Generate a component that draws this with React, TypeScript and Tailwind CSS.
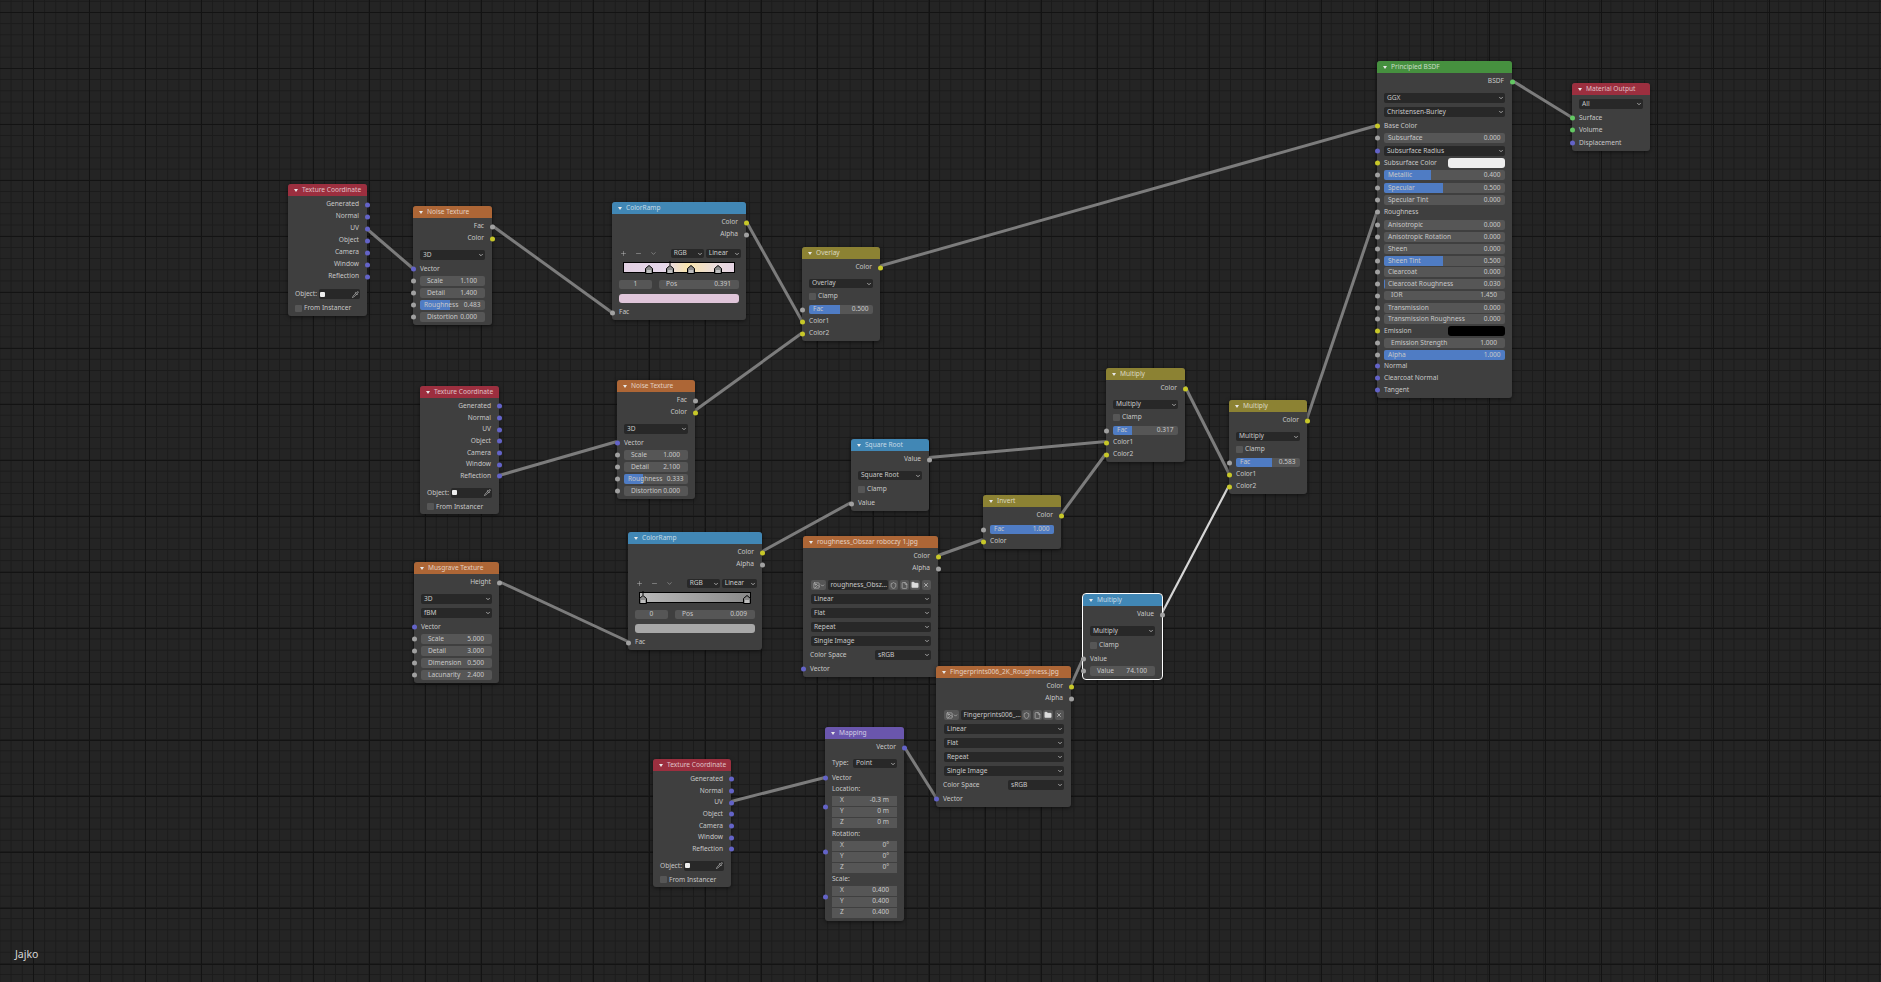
import React from "react";
import { ChevronDown, File, Folder, Image as ImageIcon, Minus, Pipette, Plus, Shield, X } from "lucide-react";

type SocketKind = "color" | "float" | "vector" | "shader";

const socketColors: Record<SocketKind, string> = {
  color: "bg-[#c7c729]",
  float: "bg-[#a1a1a1]",
  vector: "bg-[#6363c7]",
  shader: "bg-[#63c763]",
};

// wire endpoints, in page pixels: x1 y1 x2 y2
const wires = [
  [367, 229, 413, 268.5],
  [492, 225.5, 612, 312.5],
  [746, 221, 802, 321],
  [695, 410.5, 802, 333],
  [880, 266, 1377, 125.5],
  [1512, 80.5, 1572, 117.5],
  [499, 475.5, 617, 441.5],
  [499, 581.5, 628, 641.5],
  [762, 551.5, 851, 502.5],
  [929, 457.5, 1106, 441.5],
  [938, 555.5, 983, 539.5],
  [1061, 514.5, 1106, 453.5],
  [1185, 386.5, 1229, 473.5],
  [1307, 418.5, 1377, 211.5],
  [1071, 685, 1083, 658.5],
  [904, 746.5, 936, 797.5],
  [731, 801.5, 825, 777.5],
];

const Socket = ({ kind, right }: { kind: SocketKind; right?: boolean }) => (
  <span
    className={`absolute top-1/2 size-[5px] -translate-y-1/2 rounded-full ${right ? "right-[-2.5px]" : "left-[-2.5px]"} ${socketColors[kind]}`}
  />
);

const Out = ({ label, kind, cls = "h-3" }: { label: string; kind: SocketKind; cls?: string }) => (
  <div className={`relative flex items-center justify-end pr-[8px] ${cls}`}>
    {label}
    <Socket kind={kind} right />
  </div>
);

const In = ({ label, kind }: { label: string; kind: SocketKind }) => (
  <div className="relative flex h-3 items-center pl-[7px]">
    {label}
    <Socket kind={kind} />
  </div>
);

const Dropdown = ({ label, kind, cls = "px-[7px]" }: { label: string; kind?: SocketKind; cls?: string }) => (
  <div className={`relative flex h-3 items-center ${cls}`}>
    {kind && <Socket kind={kind} />}
    <div className="flex h-[9.5px] flex-1 items-center justify-between rounded-[2px] bg-[#282828] pl-[3px] pr-[1.5px]">
      <span className="whitespace-nowrap">{label}</span>
      <ChevronDown size={6} strokeWidth={3} />
    </div>
  </div>
);

const Field = ({
  label,
  value,
  kind = "float",
  fill,
  num,
}: {
  label: string;
  value: string;
  kind?: SocketKind;
  fill?: string;
  num?: boolean;
}) => (
  <div className="relative flex h-3 items-center px-[7px]">
    <Socket kind={kind} />
    <div className="relative h-[9.5px] flex-1 overflow-hidden rounded-[2px] bg-[#565656]">
      {fill && <div className={`absolute inset-y-0 left-0 bg-[#4f7cc4] ${fill}`} />}
      <div className={`relative flex h-full items-center justify-between whitespace-nowrap ${num ? "pl-[7px] pr-[8px]" : "pl-[4px] pr-[4.5px]"}`}>
        <span>{label}</span>
        <span>{value}</span>
      </div>
    </div>
  </div>
);

const Swatch = ({ label, color }: { label: string; color: string }) => (
  <div className="relative flex h-3 items-center justify-between pl-[7px] pr-[7px]">
    {label}
    <Socket kind="color" />
    <div className={`h-[9.5px] w-[57px] rounded-[3px] ${color}`} />
  </div>
);

const Check = ({ label }: { label: string }) => (
  <div className="flex h-3 items-center gap-[2px] pl-[7px]">
    <span className="size-[7px] rounded-[1px] bg-[#565656]" />
    {label}
  </div>
);

const ObjectRow = () => (
  <div className="flex h-3 items-center gap-[2px] pl-[7px] pr-[7px]">
    Object:
    <div className="flex h-[9.5px] flex-1 items-center justify-between rounded-[2px] bg-[#282828] pl-[1px] pr-[1px]">
      <span className="size-[5px] rounded-[1px] bg-[#eeeeee]" />
      <Pipette size={7} strokeWidth={2} />
    </div>
  </div>
);

const Gap = ({ cls }: { cls: string }) => <div className={cls} />;

const Node = ({
  title,
  pos,
  header,
  selected,
  children,
}: {
  title: string;
  pos: string;
  header: string;
  selected?: boolean;
  children: React.ReactNode;
}) => (
  <div
    className={`absolute rounded-[3px] bg-[#3f3f3f] pb-[1.5px] shadow-[0_1px_4px_rgba(0,0,0,0.55)] ${pos} ${selected ? "outline outline-1 outline-white" : ""}`}
  >
    <div className={`flex h-3 items-center gap-[4px] rounded-t-[3px] pl-[6px] whitespace-nowrap text-white/70 ${header}`}>
      <svg width="4" height="3" viewBox="0 0 4 3" className="shrink-0">
        <path d="M0 0H4L2 3Z" fill="#e8e8e8" />
      </svg>
      {title}
    </div>
    <div className="pt-[2.5px]">{children}</div>
  </div>
);

const red = "bg-[#9c2f3f]";
const orange = "bg-[#ad6636]";
const blue = "bg-[#4187b5]";
const olive = "bg-[#8c8233]";
const green = "bg-[#46903f]";
const purple = "bg-[#6a56ad]";

const TextureCoordinate = ({ pos, rowH = "h-3", gap = "h-[5.5px]" }: { pos: string; rowH?: string; gap?: string }) => (
  <Node title="Texture Coordinate" pos={pos} header={red}>
    <Out label="Generated" kind="vector" cls={rowH} />
    <Out label="Normal" kind="vector" cls={rowH} />
    <Out label="UV" kind="vector" cls={rowH} />
    <Out label="Object" kind="vector" cls={rowH} />
    <Out label="Camera" kind="vector" cls={rowH} />
    <Out label="Window" kind="vector" cls={rowH} />
    <Out label="Reflection" kind="vector" cls={rowH} />
    <Gap cls={gap} />
    <ObjectRow />
    <Gap cls="h-[2px]" />
    <Check label="From Instancer" />
  </Node>
);

const NoiseTexture = ({ pos, scale, detail, rough, fill }: { pos: string; scale: string; detail: string; rough: string; fill: string }) => (
  <Node title="Noise Texture" pos={pos} header={orange}>
    <Out label="Fac" kind="float" />
    <Out label="Color" kind="color" />
    <Gap cls="h-[4.5px]" />
    <Dropdown label="3D" />
    <Gap cls="h-[2px]" />
    <In label="Vector" kind="vector" />
    <Field label="Scale" value={scale} num />
    <Field label="Detail" value={detail} num />
    <Field label="Roughness" value={rough} fill={fill} />
    <Field label="Distortion" value="0.000" num />
  </Node>
);

const RampHandle = ({ pos, active }: { pos: string; active?: boolean }) => (
  <svg width="8" height="9" viewBox="0 0 8 9" className={`absolute bottom-[-2px] overflow-visible ${pos}`}>
    {active && <path d="M4 0V-4" stroke="#000" />}
    <path d="M0.5 8.5V3.5L4 0.5L7.5 3.5V8.5Z" fill="#8a8a8a" stroke="#000" />
    <rect x="2" y="5" width="4" height="3" fill="#bdbdbd" />
  </svg>
);

const ColorRamp = ({
  pos,
  index,
  position,
  ramp,
  swatch,
  children,
}: {
  pos: string;
  index: string;
  position: string;
  ramp: string;
  swatch: string;
  children: React.ReactNode;
}) => (
  <Node title="ColorRamp" pos={pos} header={blue}>
    <Out label="Color" kind="color" />
    <Out label="Alpha" kind="float" />
    <Gap cls="h-[7px]" />
    <div className="flex h-3 items-center pl-[8px]">
      <span className="w-[15px]"><Plus size={7} strokeWidth={1.5} /></span>
      <span className="w-[15px]"><Minus size={7} strokeWidth={1.5} /></span>
      <span className="w-[20.7px]"><ChevronDown size={7} strokeWidth={1.5} /></span>
      <div className="mr-[2px] flex h-[9.5px] w-[33px] items-center justify-between rounded-[2px] bg-[#282828] pl-[3px] pr-[1px]">
        RGB
        <ChevronDown size={6} strokeWidth={3} />
      </div>
      <div className="flex h-[9.5px] w-[35px] items-center justify-between rounded-[2px] bg-[#282828] pl-[3px] pr-[1px]">
        Linear
        <ChevronDown size={6} strokeWidth={3} />
      </div>
    </div>
    <Gap cls="h-[2px]" />
    <div className={`relative mx-[11px] h-[11px] border border-black ${ramp}`}>{children}</div>
    <Gap cls="h-[6px]" />
    <div className="flex h-3 items-center gap-[7px] px-[7px]">
      <div className="flex h-[9.5px] w-[33px] items-center justify-center rounded-[2px] bg-[#565656]">{index}</div>
      <div className="flex h-[9.5px] flex-1 items-center justify-between rounded-[2px] bg-[#565656] pl-[7px] pr-[8px]">
        <span>Pos</span>
        <span>{position}</span>
      </div>
    </div>
    <Gap cls="h-[2px]" />
    <div className="flex h-3 items-center px-[7px]">
      <div className={`h-[9.5px] flex-1 rounded-[3px] ${swatch}`} />
    </div>
    <Gap cls="h-[2px]" />
    <In label="Fac" kind="float" />
  </Node>
);

const ImageTexture = ({ title, file, pos }: { title: string; file: string; pos: string }) => (
  <Node title={title} pos={pos} header={orange}>
    <Out label="Color" kind="color" />
    <Out label="Alpha" kind="float" />
    <Gap cls="h-[4.5px]" />
    <div className="flex h-3 items-center gap-[1.5px] pl-[8px] pr-[7px]">
      <div className="flex h-[9.5px] w-[15px] items-center justify-center rounded-[2px] bg-[#565656]">
        <ImageIcon size={7} strokeWidth={2} />
        <ChevronDown size={5} strokeWidth={3} />
      </div>
      <div className="h-[9.5px] w-[60px] whitespace-nowrap rounded-[2px] bg-[#282828] pl-[3px] leading-[9.5px]">{file}</div>
      <div className="flex h-[9.5px] w-[9px] items-center justify-center rounded-[2px] bg-[#565656]"><Shield size={7} strokeWidth={2} /></div>
      <div className="flex h-[9.5px] w-[9px] items-center justify-center rounded-[2px] bg-[#565656]"><File size={7} strokeWidth={2} /></div>
      <div className="flex h-[9.5px] w-[10px] items-center justify-center rounded-[2px] bg-[#565656]"><Folder size={8} fill="#dddddd" strokeWidth={1} /></div>
      <div className="flex h-[9.5px] w-[9px] items-center justify-center rounded-[2px] bg-[#565656]"><X size={6} strokeWidth={3} /></div>
    </div>
    <Gap cls="h-[2px]" />
    <Dropdown label="Linear" cls="pl-[8px] pr-[7px]" />
    <Gap cls="h-[2px]" />
    <Dropdown label="Flat" cls="pl-[8px] pr-[7px]" />
    <Gap cls="h-[2px]" />
    <Dropdown label="Repeat" cls="pl-[8px] pr-[7px]" />
    <Gap cls="h-[2px]" />
    <Dropdown label="Single Image" cls="pl-[8px] pr-[7px]" />
    <Gap cls="h-[2px]" />
    <div className="flex h-3 items-center justify-between pl-[7px] pr-[7px]">
      Color Space
      <div className="flex h-[9.5px] w-[56px] items-center justify-between rounded-[2px] bg-[#282828] pl-[3px] pr-[1.5px]">
        sRGB
        <ChevronDown size={6} strokeWidth={3} />
      </div>
    </div>
    <Gap cls="h-[2px]" />
    <In label="Vector" kind="vector" />
  </Node>
);

const MixRgb = ({ title, pos, fac, fill }: { title: string; pos: string; fac: string; fill: string }) => (
  <Node title={title} pos={pos} header={olive}>
    <Out label="Color" kind="color" />
    <Gap cls="h-[4px]" />
    <Dropdown label={title} />
    <Gap cls="h-[0.5px]" />
    <Check label="Clamp" />
    <Gap cls="h-[1.5px]" />
    <Field label="Fac" value={fac} fill={fill} />
    <In label="Color1" kind="color" />
    <In label="Color2" kind="color" />
  </Node>
);

const VectorGroup = ({ x, y, z }: { x: string; y: string; z: string }) => (
  <div className="relative mx-[7px] flex flex-col">
    <span className="absolute left-[-9.5px] top-[11px] size-[5px] -translate-y-1/2 rounded-full bg-[#6363c7]" />
    {[["X", x], ["Y", y], ["Z", z]].map(([axis, value]) => (
      <div key={axis} className="flex h-[11px] items-center justify-between border-b border-[#3f3f3f] bg-[#565656] pl-[8px] pr-[8px]">
        <span>{axis}</span>
        <span>{value}</span>
      </div>
    ))}
  </div>
);

export default function App() {
  return (
    <div className="relative h-[982px] w-[1881px] overflow-hidden bg-[#242424] bg-[linear-gradient(#131313_1px,transparent_1px),linear-gradient(90deg,#131313_1px,transparent_1px),linear-gradient(#1b1b1b_1px,transparent_1px),linear-gradient(90deg,#1b1b1b_1px,transparent_1px)] bg-[size:56px_56px,56px_56px,11.2px_11.2px,11.2px_11.2px] bg-[position:33px_12px,33px_12px,10.6px_0.8px,10.6px_0.8px] font-['Noto_Sans',sans-serif] text-[6.6px] leading-none text-[#c8c8c8]">
      <svg width="1881" height="982" className="absolute inset-0">
        {wires.map(([x1, y1, x2, y2]) => (
          <line key={`${x1}-${y1}`} x1={x1} y1={y1} x2={x2} y2={y2} stroke="#7c7c7c" strokeWidth="3" />
        ))}
        <line x1="1162" y1="613" x2="1229" y2="485.5" stroke="#d6d6d6" strokeWidth="2.2" />
      </svg>

      <TextureCoordinate pos="left-[288px] top-[184px] w-[79px]" />
      <NoiseTexture pos="left-[413px] top-[206px] w-[79px]" scale="1.100" detail="1.400" rough="0.483" fill="w-[46%]" />
      <ColorRamp
        pos="left-[612px] top-[202px] w-[134px]"
        index="1"
        position="0.391"
        ramp="bg-[linear-gradient(90deg,#e2d0e2_0%,#e6d8ea_38%,#f8e4ac_58%,#eadcdc_83%,#e6d4e4_100%)]"
        swatch="bg-[#e0c6da]"
      >
        <RampHandle pos="left-[19%]" />
        <RampHandle pos="left-[38%]" active />
        <RampHandle pos="left-[57%]" />
        <RampHandle pos="left-[82%]" />
      </ColorRamp>
      <MixRgb title="Overlay" pos="left-[802px] top-[247px] w-[78px]" fac="0.500" fill="w-[48%]" />

      <TextureCoordinate pos="left-[420px] top-[386px] w-[79px]" rowH="h-[11.7px]" gap="h-[4.6px]" />
      <NoiseTexture pos="left-[617px] top-[380px] w-[78px]" scale="1.000" detail="2.100" rough="0.333" fill="w-[30%]" />

      <Node title="Musgrave Texture" pos="left-[414px] top-[562px] w-[85px]" header={orange}>
        <Out label="Height" kind="float" />
        <Gap cls="h-[4.5px]" />
        <Dropdown label="3D" />
        <Gap cls="h-[2px]" />
        <Dropdown label="fBM" />
        <Gap cls="h-[2px]" />
        <In label="Vector" kind="vector" />
        <Field label="Scale" value="5.000" num />
        <Field label="Detail" value="3.000" num />
        <Field label="Dimension" value="0.500" num />
        <Field label="Lacunarity" value="2.400" num />
      </Node>

      <ColorRamp
        pos="left-[628px] top-[532px] w-[134px]"
        index="0"
        position="0.009"
        ramp="bg-[linear-gradient(90deg,#b8b8b8,#8a8a8a)]"
        swatch="bg-[#a8a8a8]"
      >
        <RampHandle pos="left-[-1px]" active />
        <RampHandle pos="right-[-1px]" />
      </ColorRamp>

      <Node title="Square Root" pos="left-[851px] top-[439px] w-[78px]" header={blue}>
        <Out label="Value" kind="float" />
        <Gap cls="h-[4px]" />
        <Dropdown label="Square Root" />
        <Gap cls="h-[2px]" />
        <Check label="Clamp" />
        <Gap cls="h-[2px]" />
        <In label="Value" kind="float" />
      </Node>

      <ImageTexture title="roughness_Obszar roboczy 1.jpg" file="roughness_Obsz..." pos="left-[803px] top-[536px] w-[135px]" />

      <Node title="Invert" pos="left-[983px] top-[495px] w-[78px]" header={olive}>
        <Out label="Color" kind="color" />
        <Gap cls="h-[2px]" />
        <Field label="Fac" value="1.000" fill="w-full" />
        <In label="Color" kind="color" />
      </Node>

      <MixRgb title="Multiply" pos="left-[1106px] top-[368px] w-[79px]" fac="0.317" fill="w-[29%]" />
      <MixRgb title="Multiply" pos="left-[1229px] top-[400px] w-[78px]" fac="0.583" fill="w-[57%]" />

      <Node title="Multiply" pos="left-[1083px] top-[594px] w-[79px]" header={blue} selected>
        <Out label="Value" kind="float" />
        <Gap cls="h-[4.5px]" />
        <Dropdown label="Multiply" />
        <Gap cls="h-[2px]" />
        <Check label="Clamp" />
        <Gap cls="h-[2px]" />
        <In label="Value" kind="float" />
        <Field label="Value" value="74.100" num />
      </Node>

      <ImageTexture title="Fingerprints006_2K_Roughness.jpg" file="Fingerprints006_..." pos="left-[936px] top-[666px] w-[135px]" />

      <Node title="Mapping" pos="left-[825px] top-[727px] w-[79px]" header={purple}>
        <Out label="Vector" kind="vector" />
        <Gap cls="h-[4px]" />
        <div className="flex h-3 items-center justify-between px-[7px]">
          Type:
          <div className="flex h-[9.5px] w-[44px] items-center justify-between rounded-[2px] bg-[#282828] pl-[3px] pr-[1.5px]">
            Point
            <ChevronDown size={6} strokeWidth={3} />
          </div>
        </div>
        <Gap cls="h-[2.5px]" />
        <In label="Vector" kind="vector" />
        <div className="flex h-[11.5px] items-center pl-[7px]">Location:</div>
        <VectorGroup x="-0.3 m" y="0 m" z="0 m" />
        <div className="flex h-3 items-center pl-[7px]">Rotation:</div>
        <VectorGroup x="0°" y="0°" z="0°" />
        <div className="flex h-3 items-center pl-[7px]">Scale:</div>
        <VectorGroup x="0.400" y="0.400" z="0.400" />
        <Gap cls="h-[1px]" />
      </Node>

      <TextureCoordinate pos="left-[653px] top-[759px] w-[78px]" rowH="h-[11.7px]" gap="h-[4.6px]" />

      <Node title="Principled BSDF" pos="left-[1377px] top-[61px] w-[135px]" header={green}>
        <Out label="BSDF" kind="shader" />
        <Gap cls="h-[4.5px]" />
        <Dropdown label="GGX" />
        <Gap cls="h-[2px]" />
        <Dropdown label="Christensen-Burley" />
        <Gap cls="h-[2px]" />
        <In label="Base Color" kind="color" />
        <Field label="Subsurface" value="0.000" />
        <Gap cls="h-[1px]" />
        <Dropdown label="Subsurface Radius" kind="vector" />
        <Swatch label="Subsurface Color" color="bg-[#eeeeee]" />
        <Field label="Metallic" value="0.400" fill="w-[39%]" />
        <Gap cls="h-[1px]" />
        <Field label="Specular" value="0.500" fill="w-[49%]" />
        <Field label="Specular Tint" value="0.000" />
        <In label="Roughness" kind="float" />
        <Gap cls="h-[1px]" />
        <Field label="Anisotropic" value="0.000" />
        <Field label="Anisotropic Rotation" value="0.000" />
        <Field label="Sheen" value="0.000" />
        <Field label="Sheen Tint" value="0.500" fill="w-[49%]" />
        <Gap cls="-mt-[1px]" />
        <Field label="Clearcoat" value="0.000" />
        <Field label="Clearcoat Roughness" value="0.030" fill="w-[1%]" />
        <Gap cls="-mt-[0.5px]" />
        <Field label="IOR" value="1.450" num />
        <Gap cls="h-[0.5px]" />
        <Field label="Transmission" value="0.000" />
        <Gap cls="-mt-[1px]" />
        <Field label="Transmission Roughness" value="0.000" />
        <Swatch label="Emission" color="bg-black" />
        <Field label="Emission Strength" value="1.000" num />
        <Field label="Alpha" value="1.000" fill="w-full" />
        <Gap cls="-mt-[1px]" />
        <In label="Normal" kind="vector" />
        <In label="Clearcoat Normal" kind="vector" />
        <In label="Tangent" kind="vector" />
      </Node>

      <Node title="Material Output" pos="left-[1572px] top-[83px] w-[78px]" header={red}>
        <Gap cls="h-[0.5px]" />
        <Dropdown label="All" />
        <Gap cls="h-[2px]" />
        <In label="Surface" kind="shader" />
        <In label="Volume" kind="shader" />
        <Gap cls="h-[1px]" />
        <In label="Displacement" kind="vector" />
      </Node>

      <div className="absolute bottom-[23px] left-[15px] text-[10.5px] text-[#d8d8d8]">Jajko</div>
    </div>
  );
}
